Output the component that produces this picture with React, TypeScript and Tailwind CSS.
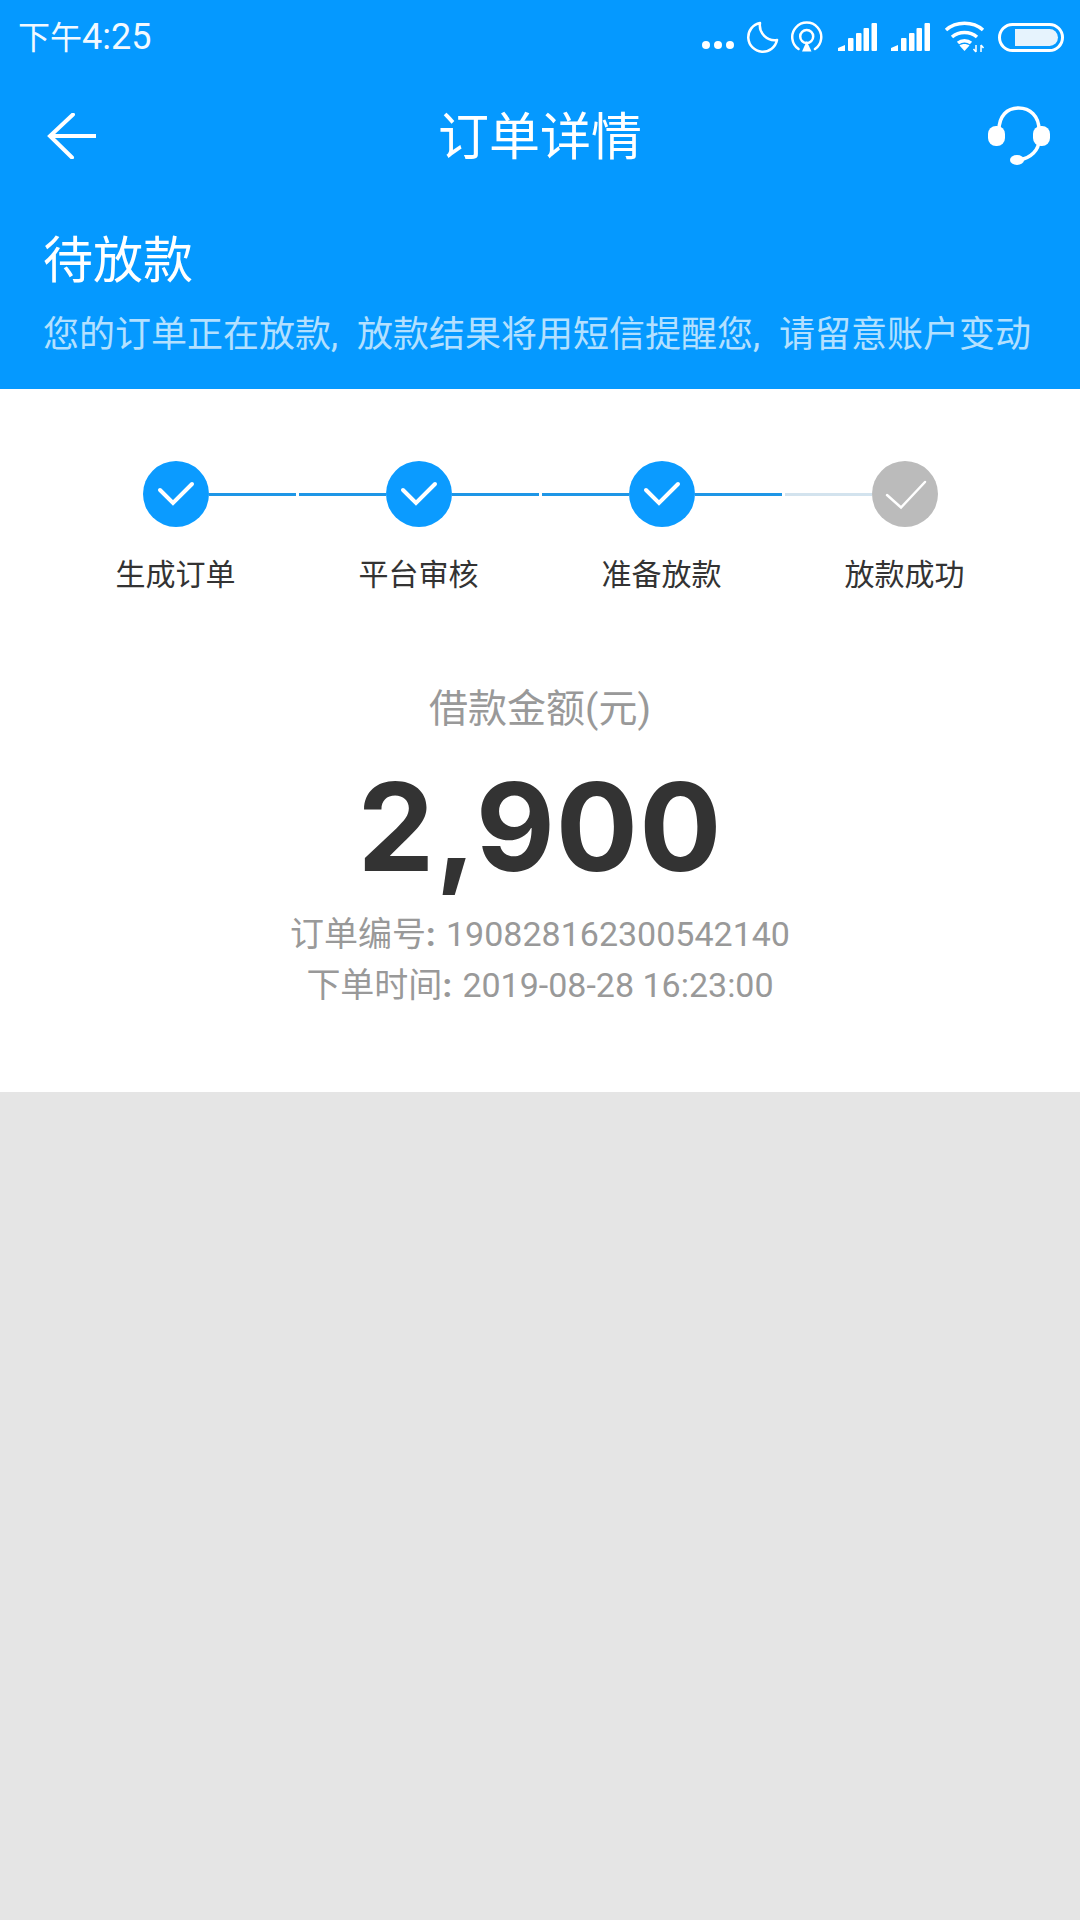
import React from 'react';

const steps = [
  { label: '生成订单', done: true },
  { label: '平台审核', done: true },
  { label: '准备放款', done: true },
  { label: '放款成功', done: false },
];

function Signal() {
  return (
    <svg width="39" height="28" viewBox="0 0 39 28" fill="white">
      <path d="M0 28 V25 L7 22 V28 Z" />
      <rect x="10" y="15" width="5.5" height="13" rx="1" />
      <rect x="18" y="10" width="5.5" height="18" rx="1" />
      <rect x="25.5" y="5" width="5.5" height="23" rx="1" />
      <rect x="33.5" y="0" width="5.5" height="28" rx="1" />
    </svg>
  );
}

function StatusBar() {
  return (
    <div className="h-[74px] flex items-center justify-between pl-[18px] pr-[16px] text-white">
      <span className="text-[32px] leading-[40px] opacity-95">
        下午<span className="text-[36px]">4:25</span>
      </span>
      <div className="flex items-center">
        <svg width="34" height="10" viewBox="0 0 34 10" fill="white" className="mt-[16px] mr-[11px]">
          <circle cx="5" cy="5" r="4" />
          <circle cx="17" cy="5" r="4" />
          <circle cx="29" cy="5" r="4" />
        </svg>
        <svg width="33" height="33" viewBox="0 0 33 33" fill="none" stroke="white" strokeWidth="2.5" className="mr-[12px]">
          <path d="M14 2 A14.5 14.5 0 1 0 31 19 A15 15 0 0 1 14 2 Z" strokeLinejoin="round" />
        </svg>
        <svg width="33" height="32" viewBox="0 0 33 32" fill="none" stroke="white" strokeWidth="2.5" className="mr-[14px]">
          <path d="M7.5 28 A14.5 14.5 0 1 1 24 28" strokeLinecap="round" />
          <circle cx="15.7" cy="15.5" r="6.5" />
          <path d="M15.7 20 L11 30.5 H20.5 Z" fill="white" stroke="none" />
        </svg>
        <div className="mr-[14px]"><Signal /></div>
        <div className="mr-[14px]"><Signal /></div>
        <svg width="42" height="32" viewBox="0 0 42 32" fill="none" stroke="white" strokeWidth="3.5" className="mr-[12px]">
          <path d="M2 9 C12 0 29 0 39 9" />
          <path d="M8 16 C15 10 26 10 33 16" />
          <path d="M14 22 C17.5 19 23.5 19 27 22" />
          <path d="M15.5 24.5 L20.5 30 L25.5 24.5 C23 22.5 18 22.5 15.5 24.5 Z" fill="white" stroke="none" />
          <path d="M32 24 V31 M32 31 L29.5 28 M37 31 V24 M37 24 L39.5 27" strokeWidth="1.5" />
        </svg>
        <div className="w-[66px] h-[29px] rounded-full border-[3px] border-white p-[3px] flex justify-end">
          <div className="w-[43px] h-full rounded-r-full rounded-l-[3px] bg-[#e6f3fd]" />
        </div>
      </div>
    </div>
  );
}

function NavBar() {
  return (
    <div className="h-[124px] flex items-center justify-between pl-[47px] pr-[29px] text-white">
      <svg width="50" height="46" viewBox="0 0 50 46" fill="none" stroke="white" strokeWidth="4" strokeLinecap="round">
        <path d="M49 23 H2" strokeLinecap="butt" />
        <path d="M26 1.5 L3 23 L25 44.5" />
      </svg>
      <h1 className="text-[51px] leading-[60px] font-normal mr-[4px] mt-[3px]">订单详情</h1>
      <svg width="64" height="60" viewBox="0 0 64 60" fill="none" stroke="white" strokeWidth="3.5">
        <path d="M12 24 C12 10 20 2 31.5 2 C43 2 52 10 52 24 V34 C52 44 44 52 32 54" />
        <rect x="1" y="20" width="17" height="20" rx="8" fill="white" stroke="none" />
        <rect x="46" y="20" width="17" height="20" rx="8" fill="white" stroke="none" />
        <ellipse cx="30" cy="54" rx="7" ry="5" fill="white" stroke="none" />
      </svg>
    </div>
  );
}

function StepCircle({ done }: { done: boolean }) {
  return (
    <div className={`w-[66px] h-[66px] shrink-0 rounded-full ${done ? 'bg-[#0b9bff]' : 'bg-[#bbbbbb]'}`}>
      <svg width="66" height="66" viewBox="0 0 66 66" fill="none" stroke="white" strokeLinecap="round">
        {done ? (
          <path d="M17 29 L30 42 L49 23" strokeWidth="4" />
        ) : (
          <path d="M15 34 L29 46.5 L53 21" strokeWidth="2.5" />
        )}
      </svg>
    </div>
  );
}

function Steps() {
  return (
    <div className="grid grid-cols-4 px-[54px]">
      {steps.map((step, i) => (
        <div key={step.label} className="flex flex-col items-center">
          <div className="w-full flex items-center px-[1.5px]">
            <div className={`flex-1 h-[3px] ${i === 0 ? '' : i === 3 ? 'bg-[#d3e3ee]' : 'bg-[#1e96e6]'}`} />
            <StepCircle done={step.done} />
            <div className={`flex-1 h-[3px] ${i === 3 ? '' : 'bg-[#1e96e6]'}`} />
          </div>
          <span className="mt-[28px] text-[30px] leading-[40px] text-[#333333]">{step.label}</span>
        </div>
      ))}
    </div>
  );
}

function Comma() {
  return <span className="inline-block w-[26px]">,</span>;
}

function InfoRow({ label, value }: { label: string; value: string }) {
  return (
    <p className="text-[34px] leading-[51px] text-[#999999] whitespace-nowrap">
      {label}
      <span className="inline-block w-[20px] font-bold">:</span>
      {value}
    </p>
  );
}

export default function App() {
  return (
    <div className="w-[1080px] h-[1920px] flex flex-col bg-[#e5e5e5] font-['Roboto','Noto_Sans_CJK_SC',sans-serif]">
      {/* 상단 */}
      <div className="bg-[#0599ff]">
        <StatusBar />
        <NavBar />
        <div className="pl-[43px] pt-[28px] pb-[29px]">
          <h2 className="text-[50px] leading-[70px] font-normal text-white">待放款</h2>
          <p className="mt-[14px] text-[36px] leading-[50px] text-[#b3e0ff] whitespace-nowrap">
            您的订单正在放款<Comma />放款结果将用短信提醒您<Comma />请留意账户变动
          </p>
        </div>
      </div>

      {/* 주문 정보 */}
      <div className="bg-white pt-[72px] pb-[81px]">
        <Steps />
        <div className="flex flex-col items-center">
          <p className="mt-[89px] text-[39px] leading-[50px] text-[#999999]">借款金额(元)</p>
          <p className="mt-[23px] text-[122px] leading-[140px] font-bold tracking-[1px] text-[#333333] font-['Inter',sans-serif]">2,900</p>
          <div className="mt-[12px] flex flex-col items-center">
            <InfoRow label="订单编号" value="190828162300542140" />
            <InfoRow label="下单时间" value="2019-08-28 16:23:00" />
          </div>
        </div>
      </div>
    </div>
  );
}
